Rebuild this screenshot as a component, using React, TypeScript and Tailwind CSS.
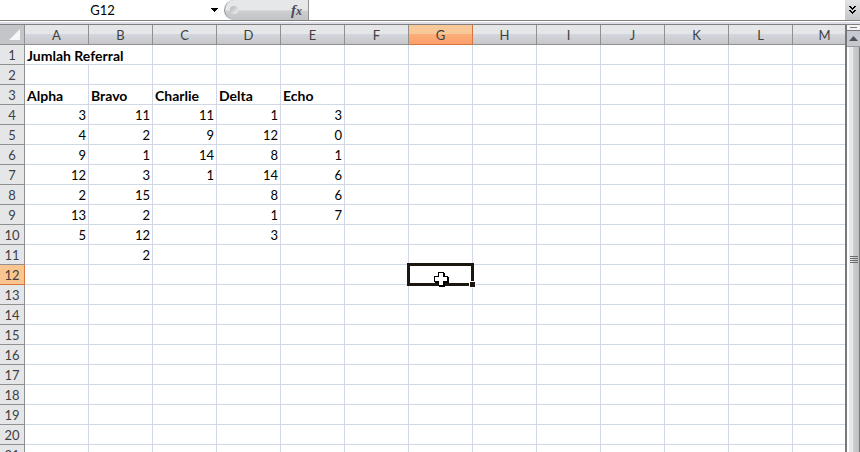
const COLUMNS = ["A", "B", "C", "D", "E", "F", "G", "H", "I", "J", "K", "L", "M"];
const ROW_COUNT = 21;
const ACTIVE = { column: "G", row: 12 };

const TITLE = "Jumlah Referral";

const REFERRALS = [
  { name: "Alpha", values: [3, 4, 9, 12, 2, 13, 5] },
  { name: "Bravo", values: [11, 2, 1, 3, 15, 2, 12, 2] },
  { name: "Charlie", values: [11, 9, 14, 1] },
  { name: "Delta", values: [1, 12, 8, 14, 8, 1, 3] },
  { name: "Echo", values: [3, 0, 1, 6, 6, 7] },
];

const getCell = (row: number, col: number) => {
  if (row === 1 && col === 0) return TITLE;
  if (row === 3) return REFERRALS[col]?.name;
  if (row > 3) return REFERRALS[col]?.values[row - 4];
  return undefined;
};

function FormulaBar() {
  return (
    <div className="flex h-[21px] shrink-0 border-b border-[#808080] bg-white">
      <input
        aria-label="Name box"
        defaultValue="G12"
        className="w-[205px] min-w-0 text-center text-[13px] leading-5 outline-none"
      />
      <button aria-label="Name list" className="flex w-[19px] items-center justify-center">
        <svg width="7" height="4" viewBox="0 0 7 4" shapeRendering="crispEdges">
          <path d="M0 0h7v1h-1v1h-1v1h-1v1h-1v-1h-1v-1h-1v-1h-1z" fill="#000" />
        </svg>
      </button>
      <div className="flex w-[85px] items-center justify-between rounded-l-full border-r border-l border-[#909090] bg-linear-to-b from-[#e6e7e9] from-50% via-[#cdced1] via-55% to-[#c2c3c5] pr-[6px] pl-[5px]">
        <span className="h-2 w-2 rounded-full bg-linear-to-br from-[#adb0b5] to-[#f5f5f5]"></span>
        <button
          aria-label="Insert function"
          className="flex items-baseline font-['Liberation_Serif',serif] text-[15px] leading-5 font-bold text-[#4a4a5c] italic"
        >
          f<span className="text-[12px]">x</span>
        </button>
      </div>
      <input aria-label="Formula" className="min-w-0 flex-1 px-1 text-[13px] outline-none" />
      <button
        aria-label="Expand formula bar"
        className="flex w-[15px] items-center justify-center bg-linear-to-b from-[#e3e4e6] to-[#c4c5c7]"
      >
        <svg width="7" height="8" viewBox="0 0 7 8" fill="#000" shapeRendering="crispEdges">
          <path d="M0 0h2v1h1v1h1v-1h1v-1h2v1h-1v1h-1v1h-1v1h-1v-1h-1v-1h-1v-1h-1z" />
          <path d="M0 4h2v1h1v1h1v-1h1v-1h2v1h-1v1h-1v1h-1v1h-1v-1h-1v-1h-1v-1h-1z" />
        </svg>
      </button>
    </div>
  );
}

function Selection() {
  return (
    <>
      <span className="absolute -top-[2px] -right-[2px] -bottom-[2px] -left-[2px] z-10 border-[3px] border-[#1c1610]"></span>
      <span className="absolute -right-[4px] -bottom-[4px] z-20 h-[7px] w-[7px] border border-white bg-[#1c1610]"></span>
      <svg
        className="absolute top-[7px] left-[25px] z-20"
        width="15"
        height="15"
        viewBox="0 0 15 15"
        shapeRendering="crispEdges"
      >
        <path d="M5 1h6v4h4v6h-4v4h-6v-4h-4v-6h4z" fill="#000" />
        <path d="M4 0h6v4h4v6h-4v4h-6v-4h-4v-6h4z" fill="#000" />
        <path d="M5 1h4v4h4v4h-4v4h-4v-4h-4v-4h4z" fill="#fff" />
      </svg>
    </>
  );
}

function Sheet() {
  return (
    <div className="min-w-0 flex-1 overflow-hidden bg-white">
      <table className="w-[857px] table-fixed border-separate border-spacing-0 text-[13px] leading-[17px]">
        <thead>
          <tr className="h-5">
            <th className="w-[25px] border-r border-b border-[#909090] bg-[#c4c5c9] p-0">
              <svg className="mr-1 ml-auto" width="11" height="11" viewBox="0 0 11 11">
                <path d="M11 0v11h-11z" fill="#f6f7f8" />
              </svg>
            </th>
            {COLUMNS.map((column) => (
              <th
                key={column}
                scope="col"
                className={
                  column === ACTIVE.column
                    ? "border-r border-b border-[#d8743c] bg-linear-to-b from-[#f9c898] from-45% via-[#fcae78] via-50% to-[#fb9f6c] px-0 pt-[2px] pb-0 font-normal text-[#3f3f3f]"
                    : "border-r border-b border-[#909090] bg-linear-to-b from-[#e5e6e8] from-45% via-[#d3d6dd] via-50% to-[#c6c7ca] px-0 pt-[2px] pb-0 font-normal text-[#3f3f3f]"
                }
              >
                {column}
              </th>
            ))}
          </tr>
        </thead>
        <tbody>
          {Array.from({ length: ROW_COUNT }, (_, i) => i + 1).map((row) => (
            <tr key={row} className="h-5">
              <th
                scope="row"
                className={
                  row === ACTIVE.row
                    ? "border-r border-b border-[#d8743c] bg-[#fac58f] px-0 pt-[2px] pb-0 font-normal text-[#3f3f3f]"
                    : "border-r border-b border-[#909090] bg-[#e5e6e8] px-0 pt-[2px] pb-0 font-normal text-[#3f3f3f]"
                }
              >
                {row}
              </th>
              {COLUMNS.map((column, col) => {
                const value = getCell(row, col);
                const isActive = column === ACTIVE.column && row === ACTIVE.row;
                // the title spills over into column B
                if (row === 1 && col === 1) return null;
                return (
                  <td
                    key={column}
                    colSpan={row === 1 && col === 0 ? 2 : 1}
                    className={
                      typeof value === "number"
                        ? "border-r border-b border-[#d0d7e5] pt-[2px] pr-[2px] pb-0 pl-0 text-right"
                        : "relative border-r border-b border-[#d0d7e5] pt-[2px] pr-0 pb-0 pl-[2px] text-[14px] leading-[17px] font-bold whitespace-nowrap"
                    }
                  >
                    {value}
                    {isActive && <Selection />}
                  </td>
                );
              })}
            </tr>
          ))}
        </tbody>
      </table>
    </div>
  );
}

function ScrollBar() {
  return (
    <div className="flex w-[15px] shrink-0 flex-col border-l-2 border-[#77787a] bg-[#d5d6d9]">
      <div className="flex h-[6px] items-center justify-center border-b border-[#77787a] bg-[#f4f4f6]">
        <span className="h-px w-[7px] bg-[#77787a]"></span>
      </div>
      <button
        aria-label="Scroll up"
        className="flex h-4 items-center justify-center border-b border-[#9a9ba5] bg-[#c6c8d0]"
      >
        <svg width="9" height="5" viewBox="0 0 9 5">
          <path d="M4.5 0l4.5 5h-9z" fill="#505258" />
        </svg>
      </button>
      <div className="flex flex-1 flex-col items-center justify-center gap-px border-r border-l-2 border-r-[#77787a] border-l-white bg-linear-to-r from-[#e8e8ea] from-35% via-[#cfd0d4] via-40% to-[#bdbec1] pt-5">
        <span className="h-px w-2 bg-[#6a6b6e]"></span>
        <span className="h-px w-2 bg-[#6a6b6e]"></span>
        <span className="h-px w-2 bg-[#6a6b6e]"></span>
        <span className="h-px w-2 bg-[#6a6b6e]"></span>
      </div>
    </div>
  );
}

export default function App() {
  return (
    <main className="flex h-screen flex-col overflow-hidden bg-white font-['Lato',sans-serif] text-black">
      <FormulaBar />
      <div className="h-1 shrink-0 border-t border-b border-t-white border-b-[#808080] bg-[#dddde8]"></div>
      <div className="flex min-h-0 flex-1">
        <Sheet />
        <ScrollBar />
      </div>
    </main>
  );
}
